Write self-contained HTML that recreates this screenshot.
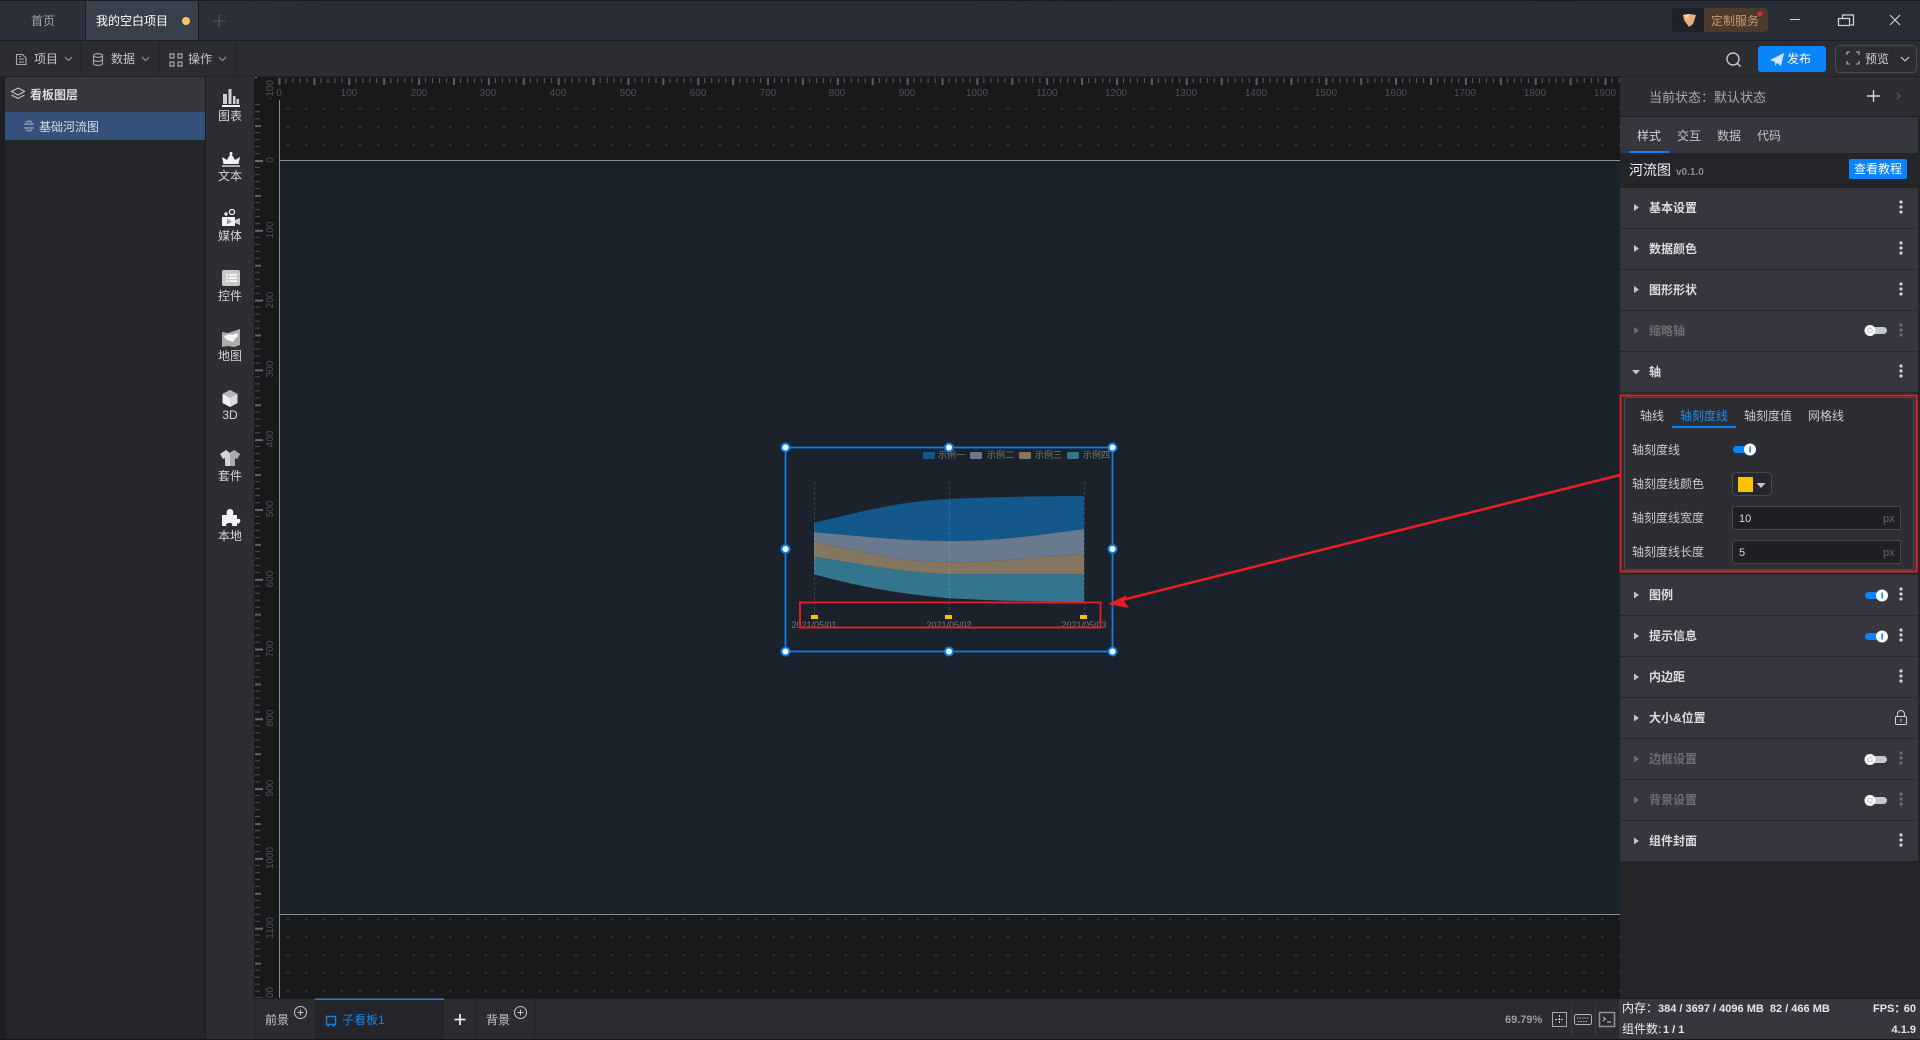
<!DOCTYPE html>
<html lang="zh"><head><meta charset="utf-8"><title>看板</title>
<style>html,body{margin:0;padding:0;background:#18191b;overflow:hidden}svg{display:block}
text{font-family:"Liberation Sans","Noto Sans CJK SC",sans-serif;font-size:12px;fill:#ccc}
.b{font-weight:700;fill:#dcdcde}.d{font-weight:700;fill:#6c6d72}.r{font-size:10px;fill:#4f5054}.m{text-anchor:middle}.e{text-anchor:end}
.s{font-size:11px;font-weight:700;fill:#e6e6e8}.c{font-size:9px;fill:#77787c}</style></head>
<body>
<svg width="1920" height="1040" viewBox="0 0 1920 1040" xmlns="http://www.w3.org/2000/svg">
<defs>
<linearGradient id="tb" x1="0" x2="1" y1="0" y2="0"><stop offset="0" stop-color="#2a2f39"/><stop offset="1" stop-color="#282c36"/></linearGradient>
<pattern id="dots" patternUnits="userSpaceOnUse" x="287" y="108" width="18" height="18"><rect width="2" height="2" fill="#323336"/></pattern>
<pattern id="hr" patternUnits="userSpaceOnUse" x="278.5" y="78" width="69.79" height="8">
<rect x="0" width="2" height="7" fill="#5c5d60"/><rect x="7" width="1" height="5" fill="#5c5d60"/><rect x="14" width="1" height="5" fill="#5c5d60"/><rect x="21" width="1" height="5" fill="#5c5d60"/><rect x="28" width="1" height="5" fill="#5c5d60"/><rect x="34.9" width="2" height="7" fill="#5c5d60"/><rect x="42" width="1" height="5" fill="#5c5d60"/><rect x="49" width="1" height="5" fill="#5c5d60"/><rect x="56" width="1" height="5" fill="#5c5d60"/><rect x="63" width="1" height="5" fill="#5c5d60"/></pattern>
<pattern id="vr" patternUnits="userSpaceOnUse" x="255" y="160" width="9" height="69.79">
<rect y="0" width="8" height="2" fill="#6a6b6e"/><rect y="7" width="5" height="1" fill="#505154"/><rect y="14" width="5" height="1" fill="#505154"/><rect y="21" width="5" height="1" fill="#505154"/><rect y="28" width="5" height="1" fill="#505154"/><rect y="34.9" width="6" height="2" fill="#606164"/><rect y="42" width="5" height="1" fill="#505154"/><rect y="49" width="5" height="1" fill="#505154"/><rect y="56" width="5" height="1" fill="#505154"/><rect y="63" width="5" height="1" fill="#505154"/></pattern>
</defs>

<!-- base -->
<rect width="1920" height="1040" fill="#18191b"/>

<!-- canvas -->
<rect x="279" y="100" width="1341" height="899" fill="url(#dots)"/>
<rect x="279" y="161" width="1341" height="753" fill="#1b222b"/>
<rect x="279" y="160" width="1341" height="1" fill="#8a8b8d"/>
<rect x="279" y="914" width="1341" height="1" fill="#8a8b8d"/>
<rect x="279" y="100" width="1" height="899" fill="#8a8b8d"/>

<!-- rulers -->
<rect x="278" y="78" width="1342" height="8" fill="url(#hr)"/>
<rect x="255" y="104" width="9" height="895" fill="url(#vr)"/>
<rect x="255" y="76" width="2" height="2" fill="#888"/>
<g class="m">
<text class="r m" x="279" y="96">0</text><text class="r m" x="349" y="96">100</text><text class="r m" x="419" y="96">200</text><text class="r m" x="488" y="96">300</text><text class="r m" x="558" y="96">400</text><text class="r m" x="628" y="96">500</text><text class="r m" x="698" y="96">600</text><text class="r m" x="768" y="96">700</text><text class="r m" x="837" y="96">800</text><text class="r m" x="907" y="96">900</text><text class="r m" x="977" y="96">1000</text><text class="r m" x="1047" y="96">1100</text><text class="r m" x="1116" y="96">1200</text><text class="r m" x="1186" y="96">1300</text><text class="r m" x="1256" y="96">1400</text><text class="r m" x="1326" y="96">1500</text><text class="r m" x="1396" y="96">1600</text><text class="r m" x="1465" y="96">1700</text><text class="r m" x="1535" y="96">1800</text><text class="r m" x="1605" y="96">1900</text>
<text class="r m" transform="translate(273 90) rotate(-90)">-100</text>
<text class="r m" transform="translate(273 160) rotate(-90)">0</text>
<text class="r m" transform="translate(273 230) rotate(-90)">100</text>
<text class="r m" transform="translate(273 300) rotate(-90)">200</text>
<text class="r m" transform="translate(273 369) rotate(-90)">300</text>
<text class="r m" transform="translate(273 439) rotate(-90)">400</text>
<text class="r m" transform="translate(273 509) rotate(-90)">500</text>
<text class="r m" transform="translate(273 579) rotate(-90)">600</text>
<text class="r m" transform="translate(273 649) rotate(-90)">700</text>
<text class="r m" transform="translate(273 718) rotate(-90)">800</text>
<text class="r m" transform="translate(273 788) rotate(-90)">900</text>
<text class="r m" transform="translate(273 858) rotate(-90)">1000</text>
<text class="r m" transform="translate(273 928) rotate(-90)">1100</text>
<text class="r m" transform="translate(273 998) rotate(-90)">1200</text>
</g>

<!-- title bar -->
<rect width="1920" height="40" fill="url(#tb)"/>
<rect width="1920" height="1" fill="#1a1b1e"/>
<rect y="40" width="1920" height="1" fill="#1c1d20"/>
<rect x="1" y="1" width="84" height="39" fill="#2b303b"/>
<text class="m" x="43" y="25" style="fill:#a2a5aa">首页</text>
<rect x="86" y="1" width="112" height="39" fill="#3a3f4c"/>
<text x="96" y="25" style="fill:#fff">我的空白项目</text>
<circle cx="186" cy="21" r="4" fill="#fcc463"/>
<rect x="85" y="1" width="1" height="39" fill="#1c1d20"/><rect x="198" y="1" width="1" height="39" fill="#1c1d20"/>
<path d="M219 15v12M213 21h12" stroke="#4a4e58" stroke-width="1.6"/>
<rect x="1672" y="8" width="40" height="24" rx="3" fill="#202228"/>
<path d="M1704 8h60a4 4 0 0 1 4 4v16a4 4 0 0 1-4 4h-60z" fill="#4d3a2f"/>
<path d="M1683 15l6-1 7 1-3 9-4 3-5-7z" fill="#eab07f"/>
<path d="M1683 15l6-1-1 5z" fill="#f7d3ad"/>
<text x="1711" y="25" style="fill:#c79a70">定制服务</text>
<circle cx="1760" cy="14" r="2.5" fill="#e3272d"/>
<rect x="1790" y="19" width="10" height="1" fill="#d8d8d8"/>
<path d="M1842.5 18v-3h11v10h-3" fill="none" stroke="#d8d8d8" stroke-width="1.2"/><rect x="1838.5" y="18.5" width="11" height="7" fill="none" stroke="#d8d8d8" stroke-width="1.2"/>
<path d="M1890 15l10 10M1900 15l-10 10" stroke="#d8d8d8" stroke-width="1.1"/>

<!-- toolbar -->
<rect y="41" width="1920" height="35" fill="#2c2d31"/>
<rect y="76" width="1920" height="1" fill="#212225"/>
<rect x="81" y="41" width="1" height="35" fill="#222326"/><rect x="158" y="41" width="1" height="35" fill="#222326"/><rect x="235" y="41" width="1" height="35" fill="#222326"/>
<path d="M16.5 54.5h6l3.500 3.500v6.500h-9.500zM19 59h5M19 62h5M19 56.500h2" fill="none" stroke="#aaa" stroke-width="1.1"/>
<text x="34" y="63" style="fill:#c4c5c8">项目</text>
<path d="M65 57l3.500 3.500 3.500-3.500" fill="none" stroke="#9a9b9e" stroke-width="1"/>
<ellipse cx="98" cy="55.500" rx="4.500" ry="1.800" fill="none" stroke="#aaa" stroke-width="1.1"/><path d="M93.500 55.500v8c0 2.400 9 2.400 9 0v-8M93.500 59.500c0 2.400 9 2.400 9 0" fill="none" stroke="#aaa" stroke-width="1.1"/>
<text x="111" y="63" style="fill:#c4c5c8">数据</text>
<path d="M142 57l3.500 3.500 3.500-3.500" fill="none" stroke="#9a9b9e" stroke-width="1"/>
<g fill="none" stroke="#aaa" stroke-width="1.200"><rect x="170" y="54" width="4" height="4"/><rect x="178" y="54" width="4" height="4"/><rect x="170" y="62" width="4" height="4"/><rect x="178" y="62" width="4" height="4"/></g>
<text x="188" y="63" style="fill:#c4c5c8">操作</text>
<path d="M219 57l3.500 3.500 3.500-3.500" fill="none" stroke="#9a9b9e" stroke-width="1"/>
<circle cx="1733" cy="59" r="6" fill="none" stroke="#c8c8ca" stroke-width="1.400"/><path d="M1737.500 63.500l3 3" stroke="#c8c8ca" stroke-width="1.400"/>
<rect x="1758" y="46" width="68" height="26" rx="3" fill="#0a84f8"/>
<path d="M1770 60l14-7-3 13-4-3-2 3v-4z" fill="#cfe6fb"/>
<text x="1787" y="63" style="fill:#fff">发布</text>
<rect x="1835.500" y="45.500" width="81" height="27" rx="4" fill="none" stroke="#4a4b50"/>
<path d="M1847 55v-3h3M1856 52h3v3M1859 61v3h-3M1850 64h-3v-3" fill="none" stroke="#b8b8ba" stroke-width="1.100"/>
<text x="1865" y="63" style="fill:#d0d0d2">预览</text>
<path d="M1901 57l4 4 4-4" fill="none" stroke="#bbb" stroke-width="1.300"/>

<!-- left panel -->
<rect x="0" y="77" width="5" height="963" fill="#1e1f22"/>
<rect x="5" y="77" width="200" height="963" fill="#242528"/>
<rect x="5" y="77" width="200" height="35" fill="#36373c"/>
<path d="M18 88l6.500 3.500-6.500 3.500-6.500-3.500zM11.500 95l6.500 3.500 6.500-3.500" fill="none" stroke="#c4c4c6" stroke-width="1.100"/>
<text class="b" x="30" y="99">看板图层</text>
<rect x="5" y="112" width="200" height="28" fill="#35517a"/>
<path d="M24 124h10M24 128h10M26 122l3-1 3 1M26 130l3 1 3-1" stroke="#8b97a8" stroke-width="1.500" fill="none"/>
<text x="39" y="131" style="fill:#d8dbe0">基础河流图</text>
<rect x="205" y="77" width="1" height="963" fill="#1a1b1d"/>

<!-- icon column -->
<rect x="206" y="77" width="48" height="963" fill="#2d2e33"/>
<g>
<path d="M222 105h18v2h-18z" fill="#f0f0f0"/>
<path d="M223 94h4v10h-4zM228.500 89h3v15h-3zM233 96h2.500v8H233zM236.500 99h2.500v5h-2.500z" fill="#cfcfcf"/>
<text class="m" x="230" y="120" style="fill:#d6d6d8">图表</text>
<circle cx="231" cy="153.500" r="1.500" fill="#f2f2f2"/>
<path d="M231 154c2 2 3 4 4 6l5-3-1.500 7h-15l-1.500-7 5 3c1-2 2-4 4-6z" fill="#f2f2f2"/><rect x="222" y="165" width="18" height="2" fill="#a9a9a9"/>
<text class="m" x="230" y="180" style="fill:#d6d6d8">文本</text>
<circle cx="232" cy="212" r="2.500" fill="none" stroke="#eee" stroke-width="1.300"/><circle cx="226" cy="214" r="1.700" fill="#eee"/>
<path d="M222 217h13v9h-13z" fill="#f4f4f4"/><path d="M235 220l5-2v7l-5-2z" fill="#c8c8c8"/><path d="M227 218.500l5 3-5 3z" fill="#999"/>
<text class="m" x="230" y="240" style="fill:#d6d6d8">媒体</text>
<rect x="222" y="270" width="18" height="16" rx="2" fill="#c9c9c9"/>
<path d="M226 274h2v2h-2zM229 274h8v2h-8zM226 277h2v2h-2zM229 277h8v2h-8zM226 280h2v2h-2zM229 280h8v2h-8z" fill="#f4f4f4"/>
<text class="m" x="230" y="300" style="fill:#d6d6d8">控件</text>
<path d="M222 332l6 1 6-2 6-2v16l-6 2-6-1-6 1z" fill="#adadad"/>
<path d="M224 336l6-2 2 1 5-2 1 3-3 3-2 3-3-1-3-1-2-2z" fill="#f4f4f4"/>
<text class="m" x="230" y="360" style="fill:#d6d6d8">地图</text>
<path d="M230 390l7.500 4v9l-7.500 4-7.500-4v-9z" fill="#f0f0f0"/><path d="M230 390l7.500 4-7.500 4-7.500-4z" fill="#b5b5b5"/><path d="M230 398l7.500-4v9l-7.500 4z" fill="#dadada"/>
<text class="m" x="230" y="419" style="font-weight:400;fill:#d6d6d8">3D</text>
<path d="M226 450l4 3 4-3 6 4-3 5-2-1v8h-10v-8l-2 1-3-5z" fill="#d2d2d2"/><path d="M230 453l4-3 6 4-3 5-2-1v8h-5z" fill="#a9a9a9"/>
<text class="m" x="230" y="480" style="fill:#d6d6d8">套件</text>
<path d="M222 515h5c-1-3 0-6 3-6s4 3 3 6h4v4c3-1 4 1 3 3s-2 2-3 1v3h-5c1-3-1-3-3-3s-3 1-3 3h-4z" fill="#f4f4f4"/>
<text class="m" x="230" y="540" style="fill:#d6d6d8">本地</text>
</g>

<!-- chart -->
<path d="M814 522.700C860 512 900 501 949 499C1000 497 1040 496 1084 496V529C1040 535 1000 541 949 541C900 541 860 536 814 532.300Z" fill="#14578a"/>
<path d="M814 532.300C860 536 900 541 949 541C1000 541 1040 535 1084 529V553.700C1040 557 1000 562.300 949 562.300C900 562.300 860 552 814 541.300Z" fill="#6a7a8e"/>
<path d="M814 541.300C860 552 900 562.300 949 562.300C1000 562.300 1040 557 1084 553.700V574.300H949C900 572 860 564 814 556.700Z" fill="#857661"/>
<path d="M814 556.700C860 564 900 572 949 574.300H1084V601.700C1040 601.700 1000 601 949 598.300C900 594 860 587 814 574.300Z" fill="#34758e"/>
<g stroke="#fff" stroke-opacity=".13" stroke-dasharray="3 2"><path d="M814.500 482V615M949.500 482V615M1084.500 482V615"/></g>
<g fill="#ffc000"><rect x="811" y="615" width="7" height="4"/><rect x="945" y="615" width="7" height="4"/><rect x="1080" y="615" width="7" height="4"/></g>
<text class="c m" x="814" y="628">2021/05/01</text><text class="c m" x="949" y="628">2021/05/02</text><text class="c m" x="1084" y="628">2021/05/03</text>
<rect x="923" y="452" width="12" height="7" rx="1.500" fill="#14578a"/><rect x="970" y="452" width="12" height="7" rx="1.500" fill="#6a7a8e"/><rect x="1019" y="452" width="12" height="7" rx="1.500" fill="#857661"/><rect x="1067" y="452" width="12" height="7" rx="1.500" fill="#34758e"/>
<text class="c" x="938" y="458">示例一</text><text class="c" x="987" y="458">示例二</text><text class="c" x="1035" y="458">示例三</text><text class="c" x="1083" y="458">示例四</text>
<rect x="785.500" y="447.500" width="327" height="204" fill="none" stroke="#0a7de8" stroke-width="1.800"/>
<g fill="#fff" stroke="#0a7de8" stroke-width="2"><circle cx="785.500" cy="447.500" r="4"/><circle cx="949" cy="447.500" r="4"/><circle cx="1112.500" cy="447.500" r="4"/><circle cx="785.500" cy="549" r="4"/><circle cx="1112.500" cy="549" r="4"/><circle cx="785.500" cy="651.500" r="4"/><circle cx="949" cy="651.500" r="4"/><circle cx="1112.500" cy="651.500" r="4"/></g>
<rect x="800" y="602.500" width="300.500" height="25" fill="none" stroke="#ee1c25" stroke-width="1.800"/>

<!-- right panel -->
<rect x="1620" y="77" width="300" height="922" fill="#242528"/>
<rect x="1620" y="77" width="300" height="39" fill="#2d2e33"/>
<rect x="1620" y="116" width="300" height="1" fill="#202124"/>
<text x="1649" y="102" style="font-size:13px;fill:#a9aaae">当前状态：默认状态</text>
<path d="M1873.500 90v12M1867 96h13" stroke="#d6d6d8" stroke-width="1.400"/>
<path d="M1897 93l3 3-3 3" fill="none" stroke="#66676b" stroke-width="1"/>
<rect x="1620" y="117" width="298" height="36" fill="#36373e"/>
<text x="1637" y="140" style="fill:#d4d5d8">样式</text><text x="1677" y="140" style="fill:#c4c5c8">交互</text><text x="1717" y="140" style="fill:#c4c5c8">数据</text><text x="1757" y="140" style="fill:#c4c5c8">代码</text>
<rect x="1629" y="151" width="40" height="2" fill="#0a84f8"/>
<rect x="1620" y="153" width="298" height="35" fill="#242528"/>
<text x="1629" y="175" style="font-size:14px;fill:#f2f2f2">河流图</text>
<text x="1676" y="175" style="font-size:10px;font-weight:700;fill:#8c8d90">v0.1.0</text>
<rect x="1849" y="159" width="58" height="20" rx="2" fill="#0a84f8"/>
<text class="m" x="1878" y="173" style="fill:#fff">查看教程</text>

<!-- rows -->
<rect x="1620" y="188" width="298" height="673" fill="#36373e"/>
<g fill="#28292c"><rect x="1620" y="228" width="298" height="1"/><rect x="1620" y="269" width="298" height="1"/><rect x="1620" y="310" width="298" height="1"/><rect x="1620" y="351" width="298" height="1"/><rect x="1620" y="392" width="298" height="3"/><rect x="1620" y="572" width="298" height="3"/><rect x="1620" y="615" width="298" height="1"/><rect x="1620" y="656" width="298" height="1"/><rect x="1620" y="697" width="298" height="1"/><rect x="1620" y="738" width="298" height="1"/><rect x="1620" y="779" width="298" height="1"/><rect x="1620" y="820" width="298" height="1"/></g>
<g fill="#c4c5c8"><path d="M1634 204l5 3.500-5 3.500zM1634 245l5 3.500-5 3.500zM1634 286l5 3.500-5 3.500zM1634 591.500l5 3.500-5 3.500zM1634 632.500l5 3.500-5 3.500zM1634 673.500l5 3.500-5 3.500zM1634 714.500l5 3.500-5 3.500zM1634 837.500l5 3.500-5 3.500z"/><path d="M1632 370l4 4.500 4-4.500z" /></g>
<g fill="#6c6d72"><path d="M1634 327l5 3.500-5 3.500zM1634 755.500l5 3.500-5 3.500zM1634 796.500l5 3.500-5 3.500z"/></g>
<text class="b" x="1649" y="212">基本设置</text>
<text class="b" x="1649" y="253">数据颜色</text>
<text class="b" x="1649" y="294">图形形状</text>
<text class="d" x="1649" y="335">缩略轴</text>
<text class="b" x="1649" y="376">轴</text>
<text class="b" x="1649" y="599">图例</text>
<text class="b" x="1649" y="640">提示信息</text>
<text class="b" x="1649" y="681">内边距</text>
<text class="b" x="1649" y="722">大小&amp;位置</text>
<text class="d" x="1649" y="763">边框设置</text>
<text class="d" x="1649" y="804">背景设置</text>
<text class="b" x="1649" y="845">组件封面</text>
<g fill="#d0d1d3">
<circle cx="1901" cy="202" r="1.600"/><circle cx="1901" cy="207" r="1.600"/><circle cx="1901" cy="212" r="1.600"/>
<circle cx="1901" cy="243" r="1.600"/><circle cx="1901" cy="248" r="1.600"/><circle cx="1901" cy="253" r="1.600"/>
<circle cx="1901" cy="284" r="1.600"/><circle cx="1901" cy="289" r="1.600"/><circle cx="1901" cy="294" r="1.600"/>
<circle cx="1901" cy="366" r="1.600"/><circle cx="1901" cy="371" r="1.600"/><circle cx="1901" cy="376" r="1.600"/>
<circle cx="1901" cy="589" r="1.600"/><circle cx="1901" cy="594" r="1.600"/><circle cx="1901" cy="599" r="1.600"/>
<circle cx="1901" cy="630" r="1.600"/><circle cx="1901" cy="635" r="1.600"/><circle cx="1901" cy="640" r="1.600"/>
<circle cx="1901" cy="671" r="1.600"/><circle cx="1901" cy="676" r="1.600"/><circle cx="1901" cy="681" r="1.600"/>
<circle cx="1901" cy="835" r="1.600"/><circle cx="1901" cy="840" r="1.600"/><circle cx="1901" cy="845" r="1.600"/>
</g>
<g fill="#6c6d72">
<circle cx="1901" cy="325" r="1.600"/><circle cx="1901" cy="330" r="1.600"/><circle cx="1901" cy="335" r="1.600"/>
<circle cx="1901" cy="753" r="1.600"/><circle cx="1901" cy="758" r="1.600"/><circle cx="1901" cy="763" r="1.600"/>
<circle cx="1901" cy="794" r="1.600"/><circle cx="1901" cy="799" r="1.600"/><circle cx="1901" cy="804" r="1.600"/>
</g>
<!-- lock -->
<rect x="1895.500" y="716.500" width="11" height="8" rx="1" fill="none" stroke="#d0d1d3" stroke-width="1"/><path d="M1897.500 716.500v-2.500a3.500 3.500 0 0 1 7 0v2.500" fill="none" stroke="#d0d1d3" stroke-width="1"/><rect x="1900.500" y="719" width="1" height="3" fill="#d0d1d3"/>
<!-- row toggles -->
<rect x="1865" y="592" width="16" height="7" rx="3.500" fill="#0a84f8"/><circle cx="1882" cy="595.500" r="6" fill="#fff"/><rect x="1881.300" y="592.500" width="1.600" height="6" fill="#0a84f8"/>
<rect x="1865" y="633" width="16" height="7" rx="3.500" fill="#0a84f8"/><circle cx="1882" cy="636.500" r="6" fill="#fff"/><rect x="1881.300" y="633.500" width="1.600" height="6" fill="#0a84f8"/>
<rect x="1870" y="327" width="17" height="7" rx="3.500" fill="#c4c7ce"/><circle cx="1870" cy="330.500" r="5.500" fill="#fff"/><circle cx="1870" cy="330.500" r="2.300" fill="none" stroke="#c4c7ce" stroke-width="1.200"/>
<rect x="1870" y="756" width="17" height="7" rx="3.500" fill="#c4c7ce"/><circle cx="1870" cy="759.500" r="5.500" fill="#fff"/><circle cx="1870" cy="759.500" r="2.300" fill="none" stroke="#c4c7ce" stroke-width="1.200"/>
<rect x="1870" y="797" width="17" height="7" rx="3.500" fill="#c4c7ce"/><circle cx="1870" cy="800.500" r="5.500" fill="#fff"/><circle cx="1870" cy="800.500" r="2.300" fill="none" stroke="#c4c7ce" stroke-width="1.200"/>

<!-- axis section -->
<rect x="1620" y="395" width="297" height="177" fill="#2d2e33"/>
<rect x="1624.500" y="397.500" width="289" height="172" rx="2" fill="none" stroke="#48494e"/>
<text x="1640" y="420" style="fill:#c8c9cc">轴线</text>
<text x="1680" y="420" style="fill:#1a8cf5">轴刻度线</text>
<text x="1744" y="420" style="fill:#c8c9cc">轴刻度值</text>
<text x="1808" y="420" style="fill:#c8c9cc">网格线</text>
<rect x="1672" y="426" width="64" height="2" fill="#0a84f8"/>
<text x="1632" y="454" style="fill:#c8c9cc">轴刻度线</text>
<text x="1632" y="488" style="fill:#c8c9cc">轴刻度线颜色</text>
<text x="1632" y="522" style="fill:#c8c9cc">轴刻度线宽度</text>
<text x="1632" y="556" style="fill:#c8c9cc">轴刻度线长度</text>
<rect x="1733" y="446" width="16" height="7" rx="3.500" fill="#0a84f8"/><circle cx="1750" cy="449.500" r="6" fill="#fff"/><rect x="1749.300" y="446.500" width="1.600" height="6" fill="#0a84f8"/>
<rect x="1732.500" y="472.500" width="39" height="23" rx="4" fill="#26272b" stroke="#48494e"/>
<rect x="1738" y="477" width="15" height="15" fill="#ffc000"/>
<path d="M1756.500 483h9l-4.500 5z" fill="#c8c9cc"/>
<rect x="1732.500" y="506.500" width="168" height="23" rx="2" fill="#1f2023" stroke="#48494e"/>
<rect x="1732.500" y="540.500" width="168" height="23" rx="2" fill="#1f2023" stroke="#48494e"/>
<text x="1739" y="522" style="fill:#d8d9dc;font-size:11px">10</text>
<text x="1739" y="556" style="fill:#d8d9dc;font-size:11px">5</text>
<text x="1883" y="522" style="font-size:11px;fill:#66676b">px</text>
<text x="1883" y="556" style="font-size:11px;fill:#66676b">px</text>
<rect x="1620.500" y="395.500" width="296" height="176" fill="none" stroke="#ee1c25" stroke-width="1.800"/>

<!-- arrow -->
<path d="M1620 475L1122 600" stroke="#ee1c25" stroke-width="2.500"/>
<path d="M1108 604L1127 595L1124 601L1129 608Z" fill="#ee1c25"/>

<!-- bottom bar -->
<rect x="254" y="999" width="1366" height="41" fill="#2b2c30"/>
<rect x="254" y="998" width="1366" height="1" fill="#1e1f22"/>
<rect x="254" y="999" width="1" height="41" fill="#222326"/>
<text x="265" y="1024" style="fill:#c8c9cc">前景</text>
<circle cx="300.500" cy="1012.500" r="6" fill="none" stroke="#c4c5c8"/><path d="M300.500 1009.500v6M297.500 1012.500h6" stroke="#c4c5c8"/>
<rect x="315" y="999" width="129" height="41" fill="#23252a"/>
<rect x="315" y="998.500" width="129" height="1.500" fill="#1a82e8"/>
<path d="M326.500 1016.500h9v8h-9zM328 1027l1-2.500M334 1027l-1-2.500" fill="none" stroke="#1a7fdc" stroke-width="1.400"/>
<text x="342" y="1024" style="fill:#1a82e8">子看板1</text>
<path d="M460 1014v11M454.500 1019.500h11" stroke="#eaeaea" stroke-width="1.800"/>
<rect x="475" y="999" width="1" height="41" fill="#222326"/><rect x="534" y="999" width="1" height="41" fill="#222326"/>
<text x="486" y="1024" style="fill:#c8c9cc">背景</text>
<circle cx="520.500" cy="1012.500" r="6" fill="none" stroke="#c4c5c8"/><path d="M520.500 1009.500v6M517.500 1012.500h6" stroke="#c4c5c8"/>
<text x="1505" y="1023" style="font-size:11px;font-weight:700;fill:#9c9da0">69.79%</text>
<rect x="1552.500" y="1012.500" width="14" height="14" fill="none" stroke="#aaabae"/>
<path d="M1559.500 1015v9M1555 1019.500h9" stroke="#cfd0d2" stroke-width="1" stroke-dasharray="2 1"/>
<rect x="1571" y="1004" width="1" height="31" fill="#3b3c40"/><rect x="1595" y="1004" width="1" height="31" fill="#3b3c40"/>
<rect x="1574.500" y="1014.500" width="17" height="10" rx="2" fill="none" stroke="#b4b5b8"/>
<path d="M1577 1018h12M1578 1021.500h10" stroke="#b4b5b8" stroke-dasharray="1.500 1"/>
<rect x="1599.500" y="1012.500" width="15" height="14" fill="#2b2c30" stroke="#909195" stroke-width="1.500"/>
<path d="M1603 1017l2.500 2-2.500 2M1607 1022h4" fill="none" stroke="#c4c5c8"/>

<!-- status -->
<rect x="1619" y="999" width="301" height="41" fill="#36373e"/>
<rect x="1619" y="998" width="301" height="1" fill="#1e1f22"/>
<text x="1622" y="1012" style="fill:#eee">内存：</text>
<text class="s" x="1658" y="1012" xml:space="preserve">384 / 3697 / 4096 MB  82 / 466 MB</text>
<text class="s" x="1873" y="1012">FPS：</text><text class="s e" x="1916" y="1012">60</text>
<text x="1622" y="1033" style="fill:#eee">组件数:</text><text class="s" x="1663" y="1033">1 / 1</text>
<text class="s e" x="1916" y="1033">4.1.9</text>
<rect y="1039" width="1920" height="1" fill="#141517"/>
</svg>
</body></html>
